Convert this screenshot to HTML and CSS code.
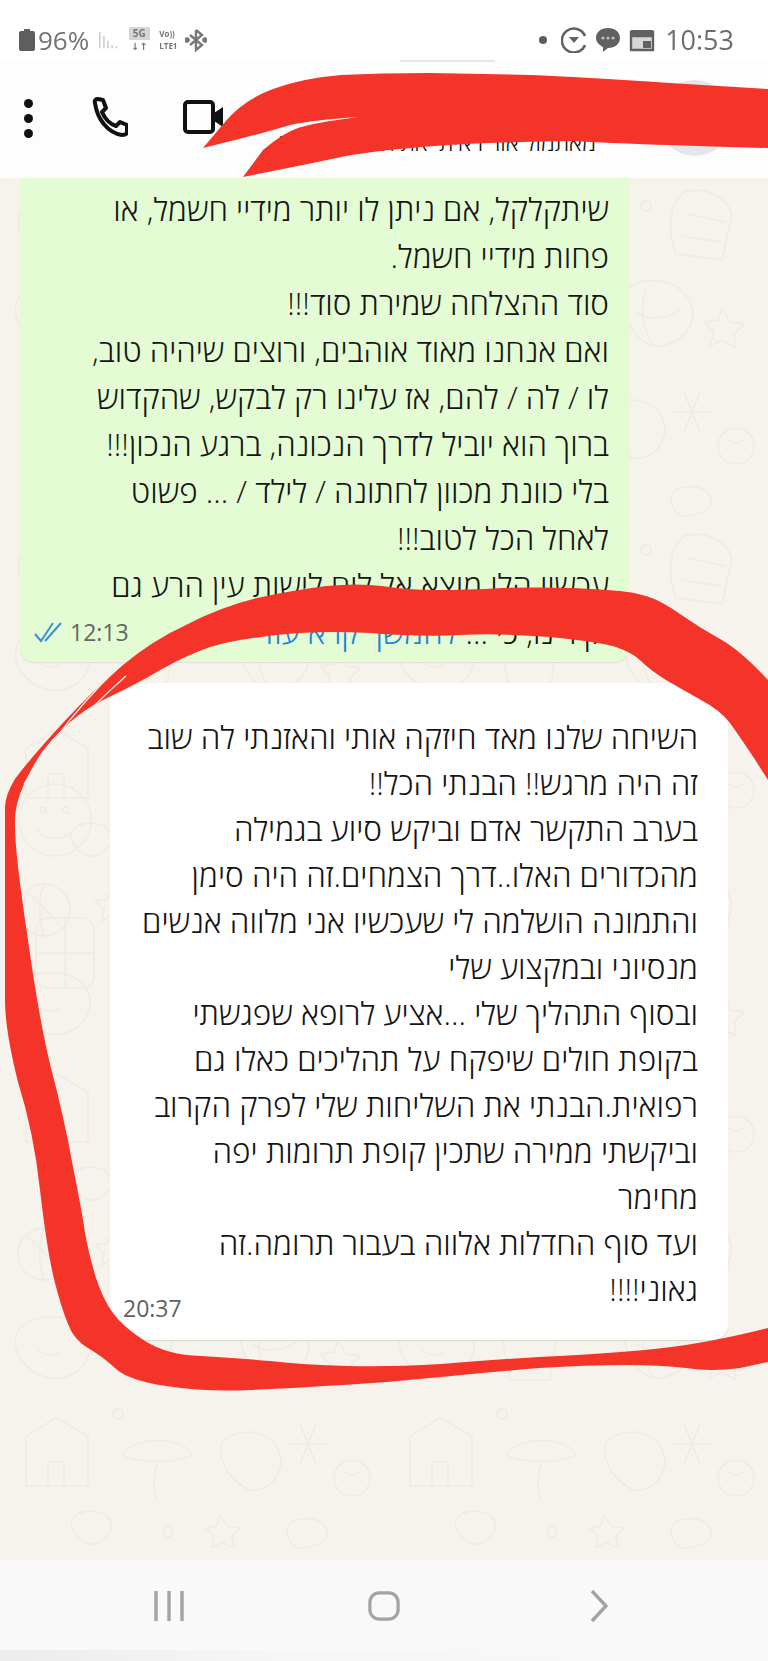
FILE: index.html
```html
<!DOCTYPE html>
<html lang="he">
<head>
    <meta charset="UTF-8">
    <meta name="viewport" content="width=device-width, initial-scale=1.0">
    <title>צ'אט</title>
    <link rel="stylesheet" href="styles.css">
</head>
<body>
<div class="phone">
    <div class="status-bar">
        <div class="status-left">
            <svg class="battery" viewBox="0 0 16 22"><path d="M5 0h6v2h3a2 2 0 0 1 2 2v16a2 2 0 0 1-2 2H2a2 2 0 0 1-2-2V4a2 2 0 0 1 2-2h3z"/></svg>
            <span class="battery-level">96%</span>
            <svg class="signal" viewBox="0 0 22 22"><path d="M1 1v20M6 6v15M11 12v9M16 17v4M21 19v2"/></svg>
            <div class="net-badge"><span class="net-five">5G</span><span class="net-arrows">↓↑</span></div>
            <div class="lte-badge"><span>Vo))</span><span>LTE1</span></div>
            <svg class="bluetooth" viewBox="0 0 22 24"><path d="M11 2v20l6-5-12-10M11 2l6 5-12 10"/><circle cx="2" cy="12" r="1.6"/><circle cx="20" cy="12" r="1.6"/></svg>
        </div>
        <div class="status-right">
            <span class="status-dot"></span>
            <svg class="status-icon" viewBox="0 0 26 26"><path class="ring" d="M24 9a12 12 0 1 0 0 9"/><path d="M8 10h10l-5 6z"/></svg>
            <svg class="status-icon" viewBox="0 0 26 26"><path d="M13 1c7 0 12 4 12 10s-5 10-12 10l-5 4 0-5C4 18 1 15 1 11 1 5 6 1 13 1z"/><g class="msg-dots"><circle cx="8" cy="11" r="1.6"/><circle cx="13" cy="11" r="1.6"/><circle cx="18" cy="11" r="1.6"/></g></svg>
            <svg class="status-icon" viewBox="0 0 26 24"><path class="cal" d="M2 4h22v18H2zM2 8h22"/><path d="M2 2h22v6H2zM14 13h8v7h-8z"/></svg>
            <span class="clock">10:53</span>
        </div>
        <span class="notch-line"></span>
    </div>

    <header class="chat-header">
        <div class="menu-dots"><span></span><span></span><span></span></div>
        <svg class="call-icon" viewBox="0 0 36 40"><path d="M3 6C2 3 4 2 6 2l5 1 3 8-4 4c3 7 8 12 14 14l4-4 7 3v7c0 2-2 3-5 3C16 36 5 22 3 6z"/></svg>
        <svg class="video-icon" viewBox="0 0 40 34"><rect x="2" y="2" width="28" height="30" rx="3"/><path class="lens" d="M31 13l9-6v20l-9-6z"/></svg>
        <div class="chat-title">מאתמול אור ראיתי את התמונה שלך</div>
        <div class="avatar"></div>
    </header>

    <main class="chat">
        <svg class="wallpaper" width="768" height="1382">
            <defs>
                <pattern id="doodles" width="384" height="344" patternUnits="userSpaceOnUse">
                    <circle cx="44" cy="44" r="26"/>
                    <path d="M26 26c12 10 24 22 34 34M44 18c-6 16-6 32 0 52"/>
                    <path d="M112 22l5 11 12 2-9 8 3 12-11-6-11 6 3-12-9-8 12-2z"/>
                    <path d="M170 20c24-10 48-4 52 16s-8 42-30 44-40-12-40-30c0-12 8-24 18-30z"/>
                    <path d="M178 42c8 10 22 10 30 0"/>
                    <circle cx="262" cy="28" r="5"/>
                    <path d="M300 14c20-6 44 4 48 24l-10 44-46-6c-8-20-8-50 8-62zM304 36l36 8M298 58l38 6"/>
                    <path d="M20 118c20-18 58-14 68 8s-14 46-38 42-44-30-30-50z"/>
                    <path d="M36 136c4 8 16 12 26 6"/>
                    <path d="M116 116c16-6 46-6 58 0l-8 54h-40zM124 116c4-16 36-16 42 0"/>
                    <circle cx="218" cy="122" r="6"/>
                    <path d="M244 110c18-14 52-8 62 14s-10 44-32 44-42-34-30-58z"/>
                    <path d="M252 134c10 8 30 8 44-2M262 110c-6 20-4 40 8 58"/>
                    <path d="M338 130l8 14 14 2-10 10 2 14-14-8-12 6 4-14-10-10 14-2z"/>
                    <path d="M26 226l30-18 32 18v50H26zM48 276v-24h16v24"/>
                    <circle cx="118" cy="204" r="5"/>
                    <path d="M122 244c16-18 58-18 70 0-10 10-60 10-70 0zM157 254c-4 12-4 26 0 38"/>
                    <path d="M222 232c14-14 42-14 54 4s0 40-18 44-44-28-36-48z"/>
                    <path d="M300 214l16 40M316 214l-16 40M290 234h36"/>
                    <circle cx="352" cy="268" r="18"/>
                    <path d="M344 262c6 4 10 4 16 0"/>
                    <path d="M74 306c12-8 30-6 36 4s-8 26-20 24-24-18-16-28z"/>
                    <circle cx="168" cy="322" r="5"/>
                    <path d="M220 306l8 10 12 2-8 8 2 12-12-6-10 6 2-12-8-8 10-2z"/>
                    <path d="M292 312c12-6 28-4 34 6s-6 18-22 20-22-18-12-26z"/>
                </pattern>
            </defs>
            <rect class="pattern-fill" width="768" height="1382"/>
            <g class="doodle-extra">
                <circle cx="55" cy="642" r="36"/>
                <circle cx="43" cy="632" r="3"/>
                <circle cx="66" cy="632" r="3"/>
                <path d="M36 650c8 14 30 14 38 0"/>
                <rect x="36" y="740" width="58" height="70" rx="12"/>
                <path d="M36 775h58M65 740v70"/>
            </g>
        </svg>

        <div class="bubble bubble-out">
            <p class="message-text">שיתקלקל, אם ניתן לו יותר מידיי חשמל, או<br>פחות מידיי חשמל.<br>סוד ההצלחה שמירת סוד!!!<br>ואם אנחנו מאוד אוהבים, ורוצים שיהיה טוב,<br>לו / לה / להם, אז עלינו רק לבקש, שהקדוש<br>ברוך הוא יוביל לדרך הנכונה, ברגע הנכון!!!<br>בלי כוונת מכוון לחתונה / לילד / ... פשוט<br>לאחל הכל לטוב!!!<br>עכשיו הלו מוצא אל לים לישות עין הרע גם</p>
            <div class="last-row">
                <span class="message-text">יקירינו, כי ... <a class="read-more">להמשך קרא עוד</a></span>
                <span class="meta">
                    <span class="meta-time">12:13</span>
                    <svg class="ticks" viewBox="0 0 28 22"><path d="M1 13l6 7L19 2M11 20L27 2"/></svg>
                </span>
            </div>
        </div>

        <div class="bubble bubble-in">
            <p class="message-text">השיחה שלנו מאד חיזקה אותי והאזנתי לה שוב<br>זה היה מרגש!! הבנתי הכל!!<br>בערב התקשר אדם וביקש סיוע בגמילה<br>מהכדורים האלו..דרך הצמחים.זה היה סימן<br>והתמונה הושלמה לי שעכשיו אני מלווה אנשים<br>מנסיוני ובמקצוע שלי<br>ובסוף התהליך שלי ...אציע לרופא שפגשתי<br>בקופת חולים שיפקח על תהליכים כאלו גם<br>רפואית.הבנתי את השליחות שלי לפרק הקרוב<br>וביקשתי ממירה שתכין קופת תרומות יפה<br>מחימר<br>ועד סוף החדלות אלווה בעבור תרומה.זה</p>
            <div class="last-row">
                <span class="message-text">גאוני!!!!</span>
                <span class="meta meta-in"><span class="meta-time">20:37</span></span>
            </div>
        </div>
    </main>

    <nav class="nav-bar">
        <svg class="nav-icon" viewBox="0 0 32 32"><path d="M3 1v30M16 1v30M29 1v30"/></svg>
        <svg class="nav-icon" viewBox="0 0 34 32"><rect x="2" y="2" width="30" height="28" rx="10"/></svg>
        <svg class="nav-icon nav-back" viewBox="0 0 18 32"><path d="M2 1l14 15L2 31"/></svg>
    </nav>
    <div class="bottom-strip"></div>

    <!-- marker scribbled over the screenshot -->
    <svg class="marker" width="768" height="1661" viewBox="0 0 768 1661">
        <path d="M203 148L225 122Q243 100 273 89Q303 78 341 75Q380 73 430 73Q480 74 530 75Q580 77 670 83L768 89L768 148Q620 144 573 141Q490 142 435 146Q380 150 346 156Q313 163 278 170L243 177L263 150Q283 133 298 128Q313 123 358 117Q313 120 290 125Q257 135 203 148Z"/>
        <path d="M768 680Q740 650 720 639Q700 628 680 614Q660 600 646 596Q633 592 620 591Q608 590 574 588Q539 587 502 588Q466 590 436 590Q407 590 382 586Q358 583 326 586Q294 590 257 598Q220 607 186 625Q153 640 123 665Q93 690 61 725Q29 760 15 779Q4 797 5 810L5 1000Q5 1030 18 1082Q34 1133 40 1190Q47 1250 54 1279Q61 1307 68 1324Q74 1340 88 1348Q103 1357 115 1368Q127 1380 166 1386Q206 1392 250 1390Q294 1388 343 1385Q392 1382 441 1377Q490 1372 539 1368Q588 1365 625 1365Q662 1365 686 1368Q711 1372 740 1368L768 1362L768 1328Q701 1345 645 1350Q588 1355 539 1357Q490 1360 441 1364Q392 1367 348 1366Q304 1365 270 1361Q235 1358 201 1356Q167 1355 145 1341Q123 1327 113 1313Q103 1300 95 1275Q88 1250 85 1233Q83 1217 73 1167Q64 1117 51 1068Q39 1020 27 933Q14 847 15 820Q15 793 42 752Q69 717 103 700Q137 684 162 669Q187 655 210 647Q233 640 276 635Q320 630 370 633Q420 637 460 635Q500 633 550 637Q600 642 616 647Q633 653 641 661Q650 670 666 680Q683 690 701 700Q720 710 730 723Q740 737 754 758L768 780Z"/>
        <path class="marker-gap" d="M118 668Q84 700 56 738Q38 762 24 784"/>
        <path class="marker-gap" d="M126 676Q96 702 70 732"/>
    </svg>
</div>
</body>
</html>
```

FILE: styles.css
```css
body {
    margin: 0;
    background-color: #fff;
    font-family: "Open Sans", "Noto Sans", "DejaVu Sans", sans-serif;
}
.phone {
    position: relative;
    width: 768px;
    height: 1661px;
    overflow: hidden;
    display: flex;
    flex-direction: column;
}

/* status bar */
.status-bar {
    position: relative;
    height: 62px;
    flex: none;
    display: flex;
    justify-content: space-between;
    align-items: center;
    padding: 17px 34px 0 19px;
    box-sizing: border-box;
    background-color: #fff;
    color: #6c6c6c;
    filter: blur(0.6px);
}
.status-left, .status-right {
    display: flex;
    align-items: center;
}
.battery {
    width: 16px;
    height: 22px;
    fill: #5e5e5e;
}
.battery-level {
    font-size: 26px;
    margin-left: 3px;
    color: #737373;
}
.signal {
    width: 18px;
    height: 22px;
    margin-left: 10px;
    fill: none;
    stroke: #cfcfcf;
    stroke-width: 2;
}
.net-badge {
    width: 26px;
    margin-left: 9px;
    display: flex;
    flex-direction: column;
    align-items: center;
    font-size: 10px;
    line-height: 13px;
    font-weight: 700;
    color: #777;
}
.net-five {
    background-color: #d5d5d5;
    padding: 0 4px;
}
.lte-badge {
    margin-left: 7px;
    display: flex;
    flex-direction: column;
    font-size: 8px;
    line-height: 12px;
    font-weight: 700;
    color: #777;
}
.bluetooth {
    width: 22px;
    height: 24px;
    margin-left: 8px;
    fill: #777;
    stroke: #777;
    stroke-width: 2.4;
}
.bluetooth path {
    fill: none;
}
.status-dot {
    width: 8px;
    height: 8px;
    border-radius: 50%;
    background-color: #5c5c5c;
    margin-right: 14px;
}
.status-icon {
    width: 26px;
    height: 26px;
    margin-right: 8px;
    fill: #616161;
}
.status-icon .ring {
    fill: none;
    stroke: #616161;
    stroke-width: 2.6;
}
.status-icon .cal {
    fill: #d7d7d7;
    stroke: #616161;
    stroke-width: 2.4;
}
.msg-dots {
    fill: #bdbdbd;
}
.clock {
    font-size: 27px;
    color: #6e6e6e;
    margin-left: 2px;
}
.notch-line {
    position: absolute;
    left: 400px;
    top: 60px;
    width: 95px;
    height: 2px;
    background-color: #e6e6e6;
}

/* chat header */
.chat-header {
    height: 116px;
    flex: none;
    display: flex;
    align-items: flex-start;
    box-sizing: border-box;
    padding: 35px 35px 0 24px;
    background-color: #fdfdfd;
    overflow: hidden;
}
.menu-dots {
    display: flex;
    flex-direction: column;
    gap: 6px;
    margin-top: 2px;
}
.menu-dots span {
    display: block;
    width: 9px;
    height: 9px;
    border-radius: 50%;
    background-color: #111;
}
.call-icon {
    width: 36px;
    height: 40px;
    margin-left: 59px;
    fill: none;
    stroke: #111;
    stroke-width: 4;
    stroke-linejoin: round;
}
.video-icon {
    width: 40px;
    height: 34px;
    margin-left: 55px;
    margin-top: 3px;
    fill: none;
    stroke: #111;
    stroke-width: 4;
}
.video-icon .lens {
    fill: #111;
    stroke: none;
}
.chat-title {
    flex: 1;
    direction: rtl;
    white-space: nowrap;
    overflow: hidden;
    font-size: 23px;
    line-height: 30px;
    font-weight: 300;
    color: #111;
    margin: 30px 61px 0 0;
    padding-left: 4px;
}
.avatar {
    width: 76px;
    height: 76px;
    flex: none;
    margin-top: -17px;
    border-radius: 50%;
    background-color: #e4e7e9;
}

/* conversation */
.chat {
    position: relative;
    flex: 1;
    display: flex;
    flex-direction: column;
    background-color: #f6f2ec;
}
.wallpaper {
    position: absolute;
    left: 0;
    top: 0;
}
.wallpaper pattern, .doodle-extra {
    fill: none;
    stroke: #efeae2;
    stroke-width: 1.5;
}
.pattern-fill {
    fill: url(#doodles);
}
.bubble {
    position: relative;
    direction: rtl;
    box-sizing: border-box;
    color: #151515;
}
.bubble-out {
    width: 609px;
    margin-left: 20px;
    padding: 7px 20px 7px 14px;
    background-color: #e4fcd4;
    border-radius: 0 0 14px 14px;
    box-shadow: 0 1px 1px rgba(0, 0, 0, 0.08);
}
.bubble-in {
    width: 618px;
    margin: 21px 0 0 110px;
    padding: 31px 30px 28px 13px;
    background-color: #fff;
    border-radius: 16px;
    box-shadow: 0 1px 1px rgba(0, 0, 0, 0.1);
}
.message-text {
    margin: 0;
    white-space: nowrap;
    font-size: 31.4px;
    line-height: 47px;
    font-weight: 300;
}
.bubble-in .message-text {
    font-size: 31.5px;
    line-height: 46px;
}
.last-row {
    display: flex;
    justify-content: space-between;
    align-items: center;
}
.read-more {
    color: #1f83d6;
}
.meta {
    display: flex;
    align-items: center;
    direction: rtl;
    gap: 8px;
    font-size: 23px;
    color: #5f6864;
}
.meta-in {
    align-self: flex-end;
    margin-bottom: -12px;
    color: #5d6268;
}
.ticks {
    width: 28px;
    height: 22px;
    fill: none;
    stroke: #3b8fd8;
    stroke-width: 2;
}

/* bottom navigation */
.nav-bar {
    height: 90px;
    flex: none;
    display: flex;
    align-items: center;
    background-color: #f9f9f9;
    padding-top: 2px;
    box-sizing: border-box;
}
.nav-icon {
    width: 32px;
    height: 32px;
    margin-left: 153px;
    fill: none;
    stroke: #a3a3a3;
    stroke-width: 3.4;
}
.nav-icon:nth-child(2) {
    margin-left: 183px;
}
.nav-icon.nav-back {
    width: 18px;
    margin-left: 190px;
}
.bottom-strip {
    height: 11px;
    flex: none;
    background: linear-gradient(to right, #ececec, #f6f6f6 35%, #f9f9f9);
}

/* red marker over everything */
.marker {
    position: absolute;
    left: 0;
    top: 0;
    fill: #f43329;
}
.marker-gap {
    fill: none;
    stroke: #f6f2ec;
    stroke-width: 1.2;
}
```
